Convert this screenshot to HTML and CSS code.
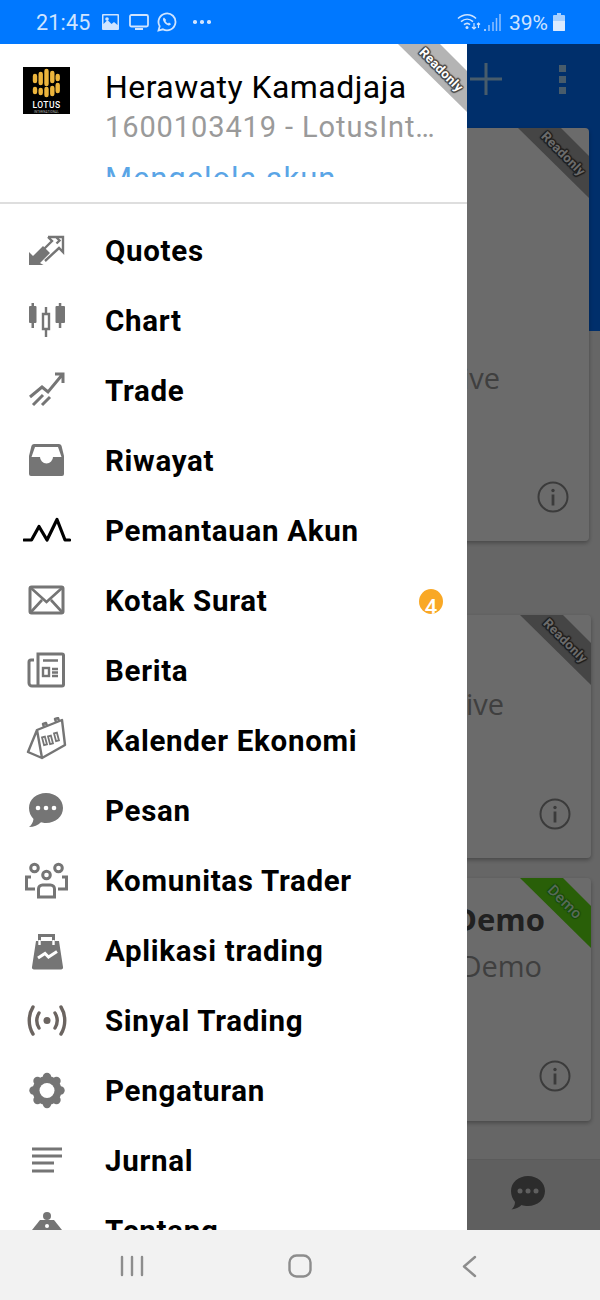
FILE: index.html
```html
<!DOCTYPE html>
<html lang="id">
<head>
<meta charset="utf-8">
<title>Akun</title>
<link rel="stylesheet" href="styles.css">
</head>
<body>
<div class="phone">
  <header class="status">
    <span class="time">21:45</span>
    <svg class="st-ico" width="17" height="16" viewBox="0 0 17 16"><path fill="#cfe4ff" fill-rule="evenodd" d="M1 0h15a1 1 0 0 1 1 1v14a1 1 0 0 1-1 1H1a1 1 0 0 1-1-1V1a1 1 0 0 1 1-1zM1.500 1.500v8.500l4-4 4 4 2.500-2 3.500 3V1.500z"/><circle cx="5" cy="5" r="1.800" fill="#cfe4ff"/></svg>
    <svg class="st-ico st-tv" width="20" height="16" viewBox="0 0 20 16"><rect x="1" y="1" width="18" height="11.500" rx="1.500" fill="none" stroke="#cfe4ff" stroke-width="1.800"/><path d="M6 15h8" stroke="#cfe4ff" stroke-width="2"/></svg>
    <svg class="st-ico st-wa" width="20" height="20" viewBox="0 0 20 20"><path fill="none" stroke="#cfe4ff" stroke-width="1.800" d="M1.500 18.500l1.200-4.300a8.500 8.500 0 1 1 3.200 3.100z"/><path fill="#cfe4ff" d="M7 5.500c-.9.600-1.300 1.800-.7 3.200.9 2 2.500 3.600 4.700 4.500 1.300.5 2.500-.1 3-1.100l-2-1.500-1 .9c-1.100-.5-2-1.400-2.600-2.500l.8-1z"/></svg>
    <span class="st-dots"><i></i><i></i><i></i></span>
    <span class="st-right">
      <svg width="24" height="20" viewBox="0 0 24 20"><g fill="none" stroke="#cfe4ff" stroke-width="1.600"><path d="M1 6.500c5.500-5 13-5 18 0"/><path d="M4 9.700c3.800-3.300 8.500-3.300 12 0"/><path d="M7 12.700c2-1.600 4.300-1.600 6 0"/></g><circle cx="10" cy="15.500" r="1.500" fill="#cfe4ff"/><path d="M17 11v6M15 15l2 2 2-2M21.500 16v-5M20 12.500l1.500-1.500 1.500 1.500" fill="none" stroke="#cfe4ff" stroke-width="1.200"/></svg>
      <svg class="st-signal" width="17" height="18" viewBox="0 0 17 18"><path d="M1 18v-2" stroke="#cfe4ff" stroke-width="1.500"/><path d="M5 18v-6M9 18v-9M12.500 18v-13M16 18v-17" stroke="#8fc0ff" stroke-width="1.500"/></svg>
      <span class="batt-txt">39%</span>
      <svg width="12" height="18" viewBox="0 0 12 18"><path fill="#a8d0ff" d="M4 0h4v2h3a1 1 0 0 1 1 1v14a1 1 0 0 1-1 1H1a1 1 0 0 1-1-1V3a1 1 0 0 1 1-1h3z"/><path fill="#dcebff" d="M0 8h12v9a1 1 0 0 1-1 1H1a1 1 0 0 1-1-1z"/></svg>
    </span>
  </header>

  <main class="screen">
    <div class="app">
      <div class="hero">
        <div class="toolbar">
          <svg width="34" height="34" viewBox="0 0 34 34"><path d="M17 1v32M1 17h32" stroke="#abdbff" stroke-width="3"/></svg>
          <span class="tb-dots"><i></i><i></i><i></i></span>
        </div>
      </div>
      <div class="cards">
        <section class="card card-a">
          <div class="ribbon ribbon-grey"><span>Readonly</span></div>
          <p class="acct acct-a">LotusInternational-Live</p>
          <svg class="info" width="32" height="32" viewBox="0 0 32 32"><circle cx="16" cy="16" r="14.500" fill="none" stroke="#8c8c8c" stroke-width="2"/><circle cx="16" cy="9.500" r="1.700" fill="#8c8c8c"/><path d="M16 13.500v11" stroke="#8c8c8c" stroke-width="2.800"/></svg>
        </section>
        <section class="card card-b">
          <div class="ribbon ribbon-grey"><span>Readonly</span></div>
          <p class="acct acct-b">LotusInternational-Live</p>
          <svg class="info" width="32" height="32" viewBox="0 0 32 32"><circle cx="16" cy="16" r="14.500" fill="none" stroke="#8c8c8c" stroke-width="2"/><circle cx="16" cy="9.500" r="1.700" fill="#8c8c8c"/><path d="M16 13.500v11" stroke="#8c8c8c" stroke-width="2.800"/></svg>
        </section>
        <section class="card card-c">
          <div class="ribbon ribbon-green"><span>Demo</span></div>
          <h2 class="acct-title">MetaTrader Demo</h2>
          <p class="acct acct-c">MetaQuotes-Demo</p>
          <svg class="info" width="32" height="32" viewBox="0 0 32 32"><circle cx="16" cy="16" r="14.500" fill="none" stroke="#8c8c8c" stroke-width="2"/><circle cx="16" cy="9.500" r="1.700" fill="#8c8c8c"/><path d="M16 13.500v11" stroke="#8c8c8c" stroke-width="2.800"/></svg>
        </section>
      </div>
      <div class="bottombar">
        <svg width="36" height="36" viewBox="0 0 36 36"><path fill="#6a6a6a" d="M18 1c9.500 0 17 6.500 17 15s-7.500 15-17 15c-2.500 0-4.500-.3-6.500-1-2 2-5 4-10 4.500 2-2 3.500-4.500 3.500-7.500C2.500 24 1 20 1 16 1 7.500 8.500 1 18 1z"/><g fill="#e2e2e2"><circle cx="10" cy="16" r="2.500"/><circle cx="18" cy="16" r="2.500"/><circle cx="26" cy="16" r="2.500"/></g></svg>
      </div>
    </div>
    <div class="scrim"></div>

    <nav class="drawer">
      <div class="ribbon ribbon-drawer"><span>Readonly</span></div>
      <div class="head">
        <div class="logo">
          <svg width="47" height="47" viewBox="0 0 47 47"><rect width="47" height="47" fill="#000"/><g fill="none" stroke="#edb53c" stroke-width="4.400" stroke-linecap="round"><path d="M12 9v5M12 22v3"/><path d="M17.700 7v9M17.700 23v3"/><path d="M23.500 4v13M23.500 22v6"/><path d="M29.300 6v8M29.300 21v6"/><path d="M34.700 9v3M34.700 18v6"/></g><text x="23.500" y="41" text-anchor="middle" class="logo-txt">LOTUS</text><text x="23.500" y="45.500" text-anchor="middle" class="logo-sub">INTERNATIONAL</text></svg>
        </div>
        <div class="who">
          <div class="name">Herawaty Kamadjaja</div>
          <div class="sub">1600103419 - LotusInternational-Live</div>
          <a class="manage">Mengelola akun</a>
        </div>
      </div>
      <ul class="menu">
        <li class="item"><svg class="ic" viewBox="0 0 48 48"><path fill="#757575" d="M6 38V25l4 4 10-10 7 7-10 10 3.500 2z"/><path fill="none" stroke="#757575" stroke-width="2.400" d="M25 10h15v15l-4-4-14 13M33 10l3.500 3.500-3 3M25 10l4 4-3.500 3.500-4 4"/></svg><span>Quotes</span></li>
        <li class="item"><svg class="ic" viewBox="0 0 48 48"><path fill="#757575" d="M7 9h1.500V6h2.500v3h1.500a1 1 0 0 1 1 1v15a1 1 0 0 1-1 1H11v5H8.500v-5H7a1 1 0 0 1-1-1V10a1 1 0 0 1 1-1zM33.500 9h2.300V6h2.500v3h2.700a1 1 0 0 1 1 1v15a1 1 0 0 1-1 1h-2.700v5h-2.500v-5h-2.300a1 1 0 0 1-1-1V10a1 1 0 0 1 1-1z"/><path fill="none" stroke="#757575" stroke-width="2.400" d="M23 10v7M23 32v8M20 17h6v15h-6z"/></svg><span>Chart</span></li>
        <li class="item"><svg class="ic" viewBox="0 0 48 48"><path fill="none" stroke="#757575" stroke-width="3" d="M7 30l12-10 6 5 14-17M32 7h8v9M10 38l10-10M19 38l8-8"/></svg><span>Trade</span></li>
        <li class="item"><svg class="ic" viewBox="0 0 48 48"><path fill="#757575" fill-rule="evenodd" d="M11 7h25a3 3 0 0 1 2.500 1.800L41 19v18a2 2 0 0 1-2 2H8a2 2 0 0 1-2-2V19l2.500-10.200A3 3 0 0 1 11 7zM12 10l-3.500 10H17a6.500 6.500 0 0 0 13 0h8.500L35 10z"/></svg><span>Riwayat</span></li>
        <li class="item"><svg class="ic" viewBox="0 0 48 48"><path fill="none" stroke="#000" stroke-width="3.200" stroke-linecap="round" stroke-linejoin="round" d="M1 33h7.500L16 19.500 24 33l10-20.500L42 33h4.500"/></svg><span>Pemantauan Akun</span></li>
        <li class="item"><svg class="ic" viewBox="0 0 48 48"><rect x="7" y="10" width="33" height="26" rx="1.500" fill="none" stroke="#757575" stroke-width="3"/><path fill="none" stroke="#757575" stroke-width="2.600" d="M8 11l15.500 14L39 11M8 35l11-12M39 35L28 23"/></svg><span>Kotak Surat</span><b class="badge">4</b></li>
        <li class="item"><svg class="ic" viewBox="0 0 48 48"><path fill="none" stroke="#757575" stroke-width="3" d="M15 7h24a1.500 1.500 0 0 1 1.500 1.500v29A1.500 1.500 0 0 1 39 39H15zV39M15 39H9a3 3 0 0 1-3-3V15a2 2 0 0 1 2-2h3"/><path stroke="#757575" stroke-width="2.400" d="M20 13.500h15M29 22h6M29 25.500h6M29 29h6"/><rect x="20" y="21" width="6" height="8" fill="none" stroke="#757575" stroke-width="2.400"/></svg><span>Berita</span></li>
        <li class="item"><svg class="ic" viewBox="0 0 48 48"><path fill="none" stroke="#757575" stroke-width="2.400" stroke-linejoin="round" d="M14 13L39 3l3 25-23 13zM14 13L5 35l14 6M21 10l-1-3 3-1 1 3M33 5l-1-3 3-1 1 3"/><g fill="none" stroke="#757575" stroke-width="1.800"><rect x="20" y="20" width="3" height="8" transform="rotate(-15 21 24)"/><rect x="26" y="19" width="3" height="8" transform="rotate(-15 27 23)"/><rect x="32" y="16" width="3" height="8" transform="rotate(-15 33 20)"/></g></svg><span>Kalender Ekonomi</span></li>
        <li class="item"><svg class="ic" viewBox="0 0 48 48"><path fill="#757575" d="M23 6c9.500 0 17 6.500 17 15s-7.500 15-17 15c-2 0-3.500-.2-5-.7-3 3-7 4.700-12 4.700 2.500-2 4-4.500 4.500-8C7.500 29 6 25 6 21 6 12.500 13.500 6 23 6z"/><g fill="#fff"><circle cx="15" cy="21" r="2.300"/><circle cx="23" cy="21" r="2.300"/><circle cx="31" cy="21" r="2.300"/></g></svg><span>Pesan</span></li>
        <li class="item"><svg class="ic" viewBox="0 0 48 48"><g fill="none" stroke="#757575" stroke-width="3"><circle cx="11.500" cy="11" r="3.800"/><circle cx="35.500" cy="11" r="3.800"/><circle cx="23.500" cy="18" r="3.800"/><path d="M8 20H3.500v12H12M39 20h4.500v12H35M15.500 40v-8a4 4 0 0 1 4-4h8a4 4 0 0 1 4 4v8z"/></g></svg><span>Komunitas Trader</span></li>
        <li class="item"><svg class="ic" viewBox="0 0 48 48"><path fill="#757575" d="M13 14h23l4 26a2 2 0 0 1-2 2.500H11a2 2 0 0 1-2-2.500z"/><path fill="none" stroke="#757575" stroke-width="3" d="M16.500 14V8.500h14V14"/><path stroke="#fff" stroke-width="2.400" d="M16.500 13v5M30.500 13v5"/><path fill="none" stroke="#fff" stroke-width="3" d="M15 31l7-4.500 3.500 3.500 8.500-5.500"/></svg><span>Aplikasi trading</span></li>
        <li class="item"><svg class="ic" viewBox="0 0 48 48"><circle cx="24" cy="23.500" r="3.500" fill="#6b6460"/><path fill="none" stroke="#6b6460" stroke-width="3.400" stroke-linecap="round" d="M16 16c-3 5-3 10 0 15M32 16c3 5 3 10 0 15M10 10c-5 8-5 19 0 27M38 10c5 8 5 19 0 27"/></svg><span>Sinyal Trading</span></li>
        <li class="item"><svg class="ic" viewBox="0 0 48 48"><g fill="#757575"><circle cx="24" cy="23.500" r="14.500"/><circle cx="24" cy="10" r="4.200"/><circle cx="24" cy="37" r="4.200"/><circle cx="10.500" cy="23.500" r="4.200"/><circle cx="37.500" cy="23.500" r="4.200"/><circle cx="14.500" cy="14" r="4.200"/><circle cx="33.500" cy="14" r="4.200"/><circle cx="14.500" cy="33" r="4.200"/><circle cx="33.500" cy="33" r="4.200"/></g><circle cx="24" cy="23.500" r="7.500" fill="#fff"/></svg><span>Pengaturan</span></li>
        <li class="item"><svg class="ic" viewBox="0 0 48 48"><path stroke="#757575" stroke-width="3" d="M9 12h30M9 19h30M9 26h22M9 34h22"/></svg><span>Jurnal</span></li>
        <li class="item"><svg class="ic" viewBox="0 0 48 48"><circle cx="24" cy="9" r="4" fill="#757575"/><path fill="#757575" d="M17 13h14l8 10-3 3H12l-3-3z"/><circle cx="24" cy="19" r="2" fill="#fff"/></svg><span>Tentang</span></li>
      </ul>
    </nav>
  </main>

  <footer class="navbar">
    <svg width="24" height="22" viewBox="0 0 24 22"><path stroke="#8d8d8d" stroke-width="2.400" stroke-linecap="round" d="M2 2v18M12 2v18M22 2v18"/></svg>
    <svg width="24" height="24" viewBox="0 0 24 24"><rect x="1.500" y="1.500" width="21" height="21" rx="7" fill="none" stroke="#8d8d8d" stroke-width="2.400"/></svg>
    <svg width="15" height="23" viewBox="0 0 15 23"><path fill="none" stroke="#8d8d8d" stroke-width="2.400" stroke-linecap="round" stroke-linejoin="round" d="M13 2L2 11.500 13 21"/></svg>
  </footer>
</div>
</body>
</html>
```
FILE: styles.css
```css
* { box-sizing: border-box; }
html, body { margin: 0; padding: 0; }
body { width: 600px; height: 1300px; overflow: hidden; font-family: Roboto, "Liberation Sans", sans-serif; background: #f2f2f2; }
.phone { width: 600px; height: 1300px; display: flex; flex-direction: column; }

/* status bar */
.status { height: 44px; flex: none; background: #0078ff; color: #cfe4ff; display: flex; align-items: center; padding-left: 36px; }
.time { font-size: 21.500px; width: 56px; letter-spacing: .2px; margin-top: 1px; }
.st-ico { margin-left: 10px; flex: none; }
.st-tv { margin-left: 10px; }
.st-wa { margin-left: 8px; }
.st-dots { display: flex; gap: 3.500px; margin-left: 16px; }
.st-dots i { width: 3.500px; height: 3.500px; border-radius: 50%; background: #cfe4ff; }
.st-right { margin-left: auto; margin-right: 35px; display: flex; align-items: center; }
.st-signal { margin-left: 3px; }
.batt-txt { font-size: 21px; margin: 1px 5px 0 8px; }

/* page behind the drawer */
.screen { flex: 1; position: relative; overflow: hidden; min-height: 0; }
.app { height: 100%; display: flex; flex-direction: column; background: #f3f3f3; }
.hero { height: 287px; flex: none; background: #0070ff; }
.toolbar { height: 70px; display: flex; align-items: center; padding-left: 469px; }
.tb-dots { display: flex; flex-direction: column; gap: 4px; margin-left: 56px; }
.tb-dots i { width: 7px; height: 7px; background: #abdbff; }
.cards { margin-top: -203px; display: flex; flex-direction: column; flex: 1; }
.card { position: relative; background: #fff; border-radius: 4px; box-shadow: 0 2px 4px rgba(0,0,0,.3); display: flex; flex-direction: column; text-align: right; overflow: hidden; }
.card-a { height: 413px; width: 589px; padding: 230px 89px 0 0; }
.card-b { height: 243px; width: 591px; margin-top: 74px; padding: 69px 87px 0 0; }
.card-c { height: 243px; width: 591px; margin-top: 20px; padding: 19px 46px 0 0; }
.acct { margin: 0; font: 400 29px/40px "Open Sans", sans-serif; color: #969696; white-space: nowrap; }
.acct-title { margin: 0; font: 700 31px/44px "Open Sans", sans-serif; color: #505050; white-space: nowrap; }
.acct-c { padding-right: 3px; margin-top: 5px; }
.info { margin-top: auto; margin-bottom: 28px; align-self: flex-end; flex: none; }
.card-a .info { margin-right: -69px; }
.card-b .info { margin-right: -67px; }
.card-c .info { margin-right: -26px; margin-bottom: 29px; }
.bottombar { height: 71px; flex: none; background: #e2e2e2; border-top: 1px solid #d8d8d8; display: flex; align-items: center; padding: 0 0 5px 510px; }
.scrim { position: absolute; inset: 0; background: rgba(0,0,0,.58); }

/* ribbons */
.ribbon { position: absolute; top: 0; right: 0; width: 71px; height: 71px; clip-path: polygon(0 0, 43px 0, 71px 28px, 71px 70px); }
.ribbon span { position: absolute; left: 45px; top: 26px; transform: translate(-50%, -50%) rotate(45deg); font: 700 13px/14px Roboto, sans-serif; letter-spacing: .2px; color: #fff; white-space: nowrap; text-shadow: 1px 0 1px #444, -1px 0 1px #444, 0 1px 1px #444, 0 -1px 1px #444, 1px 1px 1px #444, -1px -1px 1px #444, 1px -1px 1px #444, -1px 1px 1px #444; }
.ribbon-grey { background: #a4a4a4; }
.ribbon-drawer { width: 69px; height: 69px; background: #b4b4b4; z-index: 1; clip-path: polygon(0 0, 42px 0, 69px 27px, 69px 68px); }
.ribbon-drawer span { left: 43px; }
.ribbon-green { background: #62e214; }
.ribbon-green span { top: 24px; font-weight: 500; font-size: 15px; letter-spacing: .5px; color: #d0ffd0; text-shadow: 1px 0 1px #30a718, -1px 0 1px #30a718, 0 1px 1px #30a718, 0 -1px 1px #30a718; }

/* drawer */
.drawer { position: absolute; left: 0; top: 0; bottom: 0; width: 467px; background: #fff; overflow: hidden; }
.head { height: 160px; border-bottom: 2px solid #dedede; display: flex; padding: 23px 0 0 23px; overflow: hidden; }
.logo { width: 47px; height: 47px; flex: none; }
.logo svg { display: block; }
.logo-txt { font: 500 8.500px Roboto, sans-serif; fill: #fff; letter-spacing: .4px; }
.logo-sub { font: 400 3px Roboto, sans-serif; fill: #bbb; letter-spacing: .2px; }
.who { margin-left: 35px; width: 334px; height: 110px; min-width: 0; overflow: hidden; }
.name { font-size: 32px; line-height: 40px; letter-spacing: .45px; color: #000; white-space: nowrap; }
.sub { font-size: 29px; line-height: 40px; letter-spacing: .9px; color: #9a9a9a; white-space: nowrap; overflow: hidden; text-overflow: ellipsis; }
.manage { display: block; margin-top: 12px; font-size: 31px; line-height: 40px; letter-spacing: .9px; color: #5aa5e6; white-space: nowrap; }
.menu { list-style: none; margin: 0; padding: 12px 0 0; }
.item { height: 70px; display: flex; align-items: center; padding-left: 23px; font-weight: 700; font-size: 29.500px; letter-spacing: .7px; color: #000; }
.ic { width: 48px; height: 48px; flex: none; margin-right: 34px; }
.badge { margin-left: auto; margin-right: 24px; width: 24px; height: 25px; border-radius: 50%; background: #f9a825; color: #fff; font: 500 22px/25px Roboto, sans-serif; letter-spacing: 0; text-align: center; padding-top: 6px; overflow: hidden; }

/* system nav bar */
.navbar { height: 70px; flex: none; background: #f2f2f2; display: flex; align-items: center; }
.navbar svg { position: relative; top: 1px; }
.navbar svg:nth-child(1) { margin-left: 120px; }
.navbar svg:nth-child(2) { margin-left: 144px; }
.navbar svg:nth-child(3) { margin-left: 150px; }
```
